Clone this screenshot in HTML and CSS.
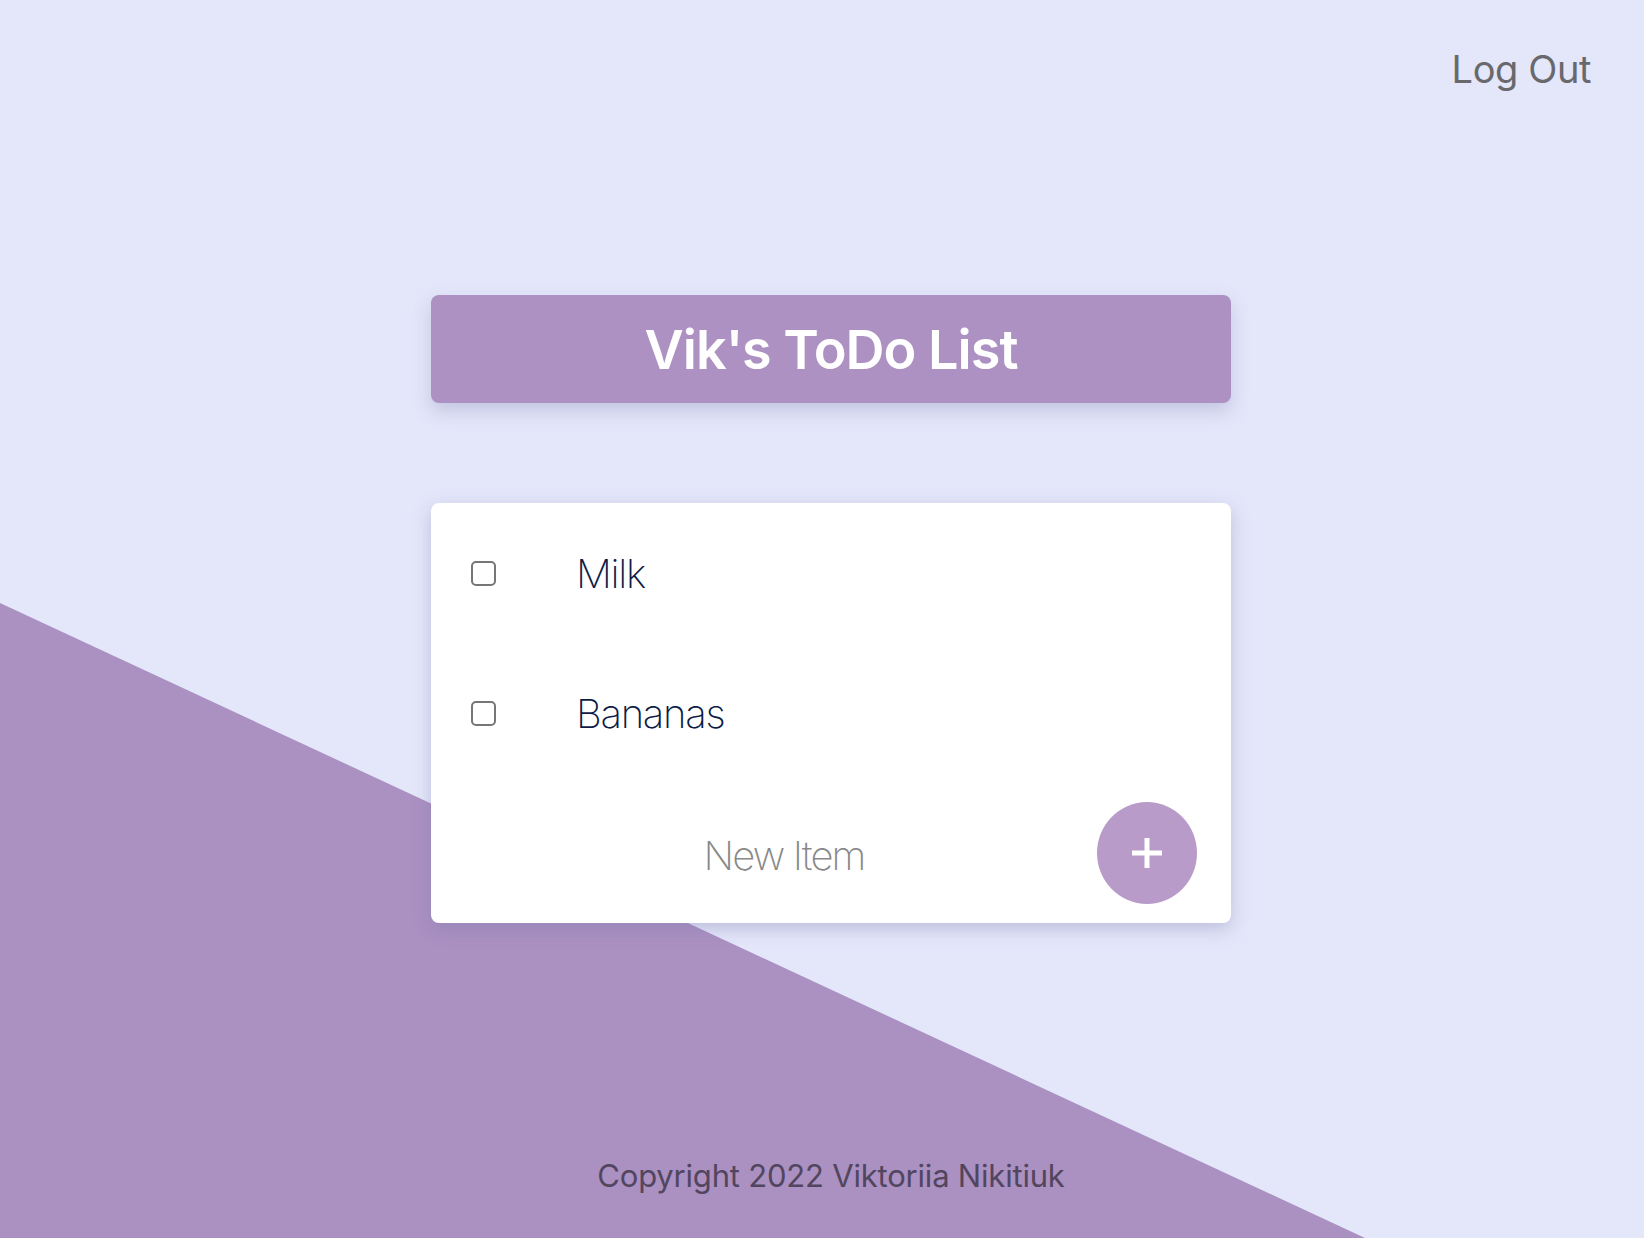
FILE: index.html
```html
<!DOCTYPE html>
<html lang="en">
<head>
<meta charset="utf-8">
<title>Vik's ToDo List</title>
<link rel="stylesheet" href="styles.css">
</head>
<body>
<div class="backdrop"></div>
<div class="page">
  <header class="top">
    <a class="logout" href="#">Log Out</a>
  </header>
  <main class="content">
    <div class="heading"><h1>Vik's ToDo List</h1></div>
    <div class="card">
      <div class="item">
        <input class="check" type="checkbox">
        <p class="label">Milk</p>
      </div>
      <div class="item">
        <input class="check" type="checkbox">
        <p class="label">Bananas</p>
      </div>
      <form class="new-row" onsubmit="return false">
        <input class="new-input" type="text" placeholder="New Item" autocomplete="off">
        <button class="add" type="submit" aria-label="Add">
          <svg width="32" height="32" viewBox="0 0 32 32"><path d="M16 1v30M1 16h30" stroke="#fff" stroke-width="5" fill="none"/></svg>
        </button>
      </form>
    </div>
  </main>
  <footer class="foot">
    <p>Copyright 2022 Viktoriia Nikitiuk</p>
  </footer>
</div>
</body>
</html>
```
FILE: styles.css
```css
html, body {
  margin: 0;
  padding: 0;
}
body {
  background: #e4e7fa;
  font-family: "Inter", "Noto Sans", sans-serif;
  min-height: 1238px;
  position: relative;
  overflow: hidden;
}
.backdrop {
  position: absolute;
  inset: 0;
  background: #ab90c2;
  clip-path: polygon(0 603px, 1365px 1238px, 0 1238px);
  z-index: 0;
}
.page {
  position: relative;
  z-index: 1;
  display: flex;
  flex-direction: column;
}
.top {
  display: flex;
  justify-content: flex-end;
  padding: 46px 53px 0 0;
}
.logout {
  font-size: 38px;
  line-height: 46px;
  color: #68686d;
  text-decoration: none;
  font-weight: 400;
  letter-spacing: -0.4px;
}
.content {
  display: flex;
  flex-direction: column;
  align-items: center;
  padding-left: 18px;
}
.heading {
  margin-top: 203px;
  width: 800px;
  height: 108px;
  background: #ac91c2;
  border-radius: 8px;
  box-shadow: 0 8px 18px rgba(120, 120, 170, 0.3);
  display: flex;
  align-items: center;
  justify-content: center;
}
.heading h1 {
  margin: 0;
  color: #fff;
  font-size: 54px;
  font-weight: 600;
  letter-spacing: -1px;
}
.card {
  margin-top: 100px;
  width: 800px;
  background: #fff;
  border-radius: 8px;
  box-shadow: 0 6px 18px rgba(120, 120, 170, 0.36);
  display: flex;
  flex-direction: column;
}
.item {
  height: 140px;
  display: flex;
  align-items: center;
  padding-left: 40px;
}
.check {
  appearance: none;
  -webkit-appearance: none;
  margin: 0;
  width: 25px;
  height: 25px;
  border: 2px solid #767676;
  border-radius: 5px;
  background: #fff;
  box-sizing: border-box;
}
.label {
  margin: 0 0 0 80px;
  font-size: 40px;
  font-weight: 200;
  color: #0c1c46;
  letter-spacing: -1.3px;
}
.new-row {
  height: 140px;
  display: flex;
  align-items: center;
  padding: 0 34px 0 40px;
  margin: 0;
}
.new-input {
  flex: 1;
  border: none;
  outline: none;
  background: transparent;
  font-family: inherit;
  font-size: 40px;
  font-weight: 200;
  letter-spacing: -1.9px;
  text-align: center;
  color: #333;
  padding: 0;
  margin-top: 4px;
}
.new-input::placeholder {
  color: #888;
}
.add {
  width: 100px;
  height: 102px;
  border-radius: 50%;
  border: none;
  background: #b89bc8;
  display: flex;
  align-items: center;
  justify-content: center;
  padding: 0;
}
.foot {
  margin-top: 234px;
  display: flex;
  justify-content: center;
  padding-left: 18px;
}
.foot p {
  margin: 0;
  font-size: 31px;
  color: #52465f;
  letter-spacing: -0.2px;
}
```
